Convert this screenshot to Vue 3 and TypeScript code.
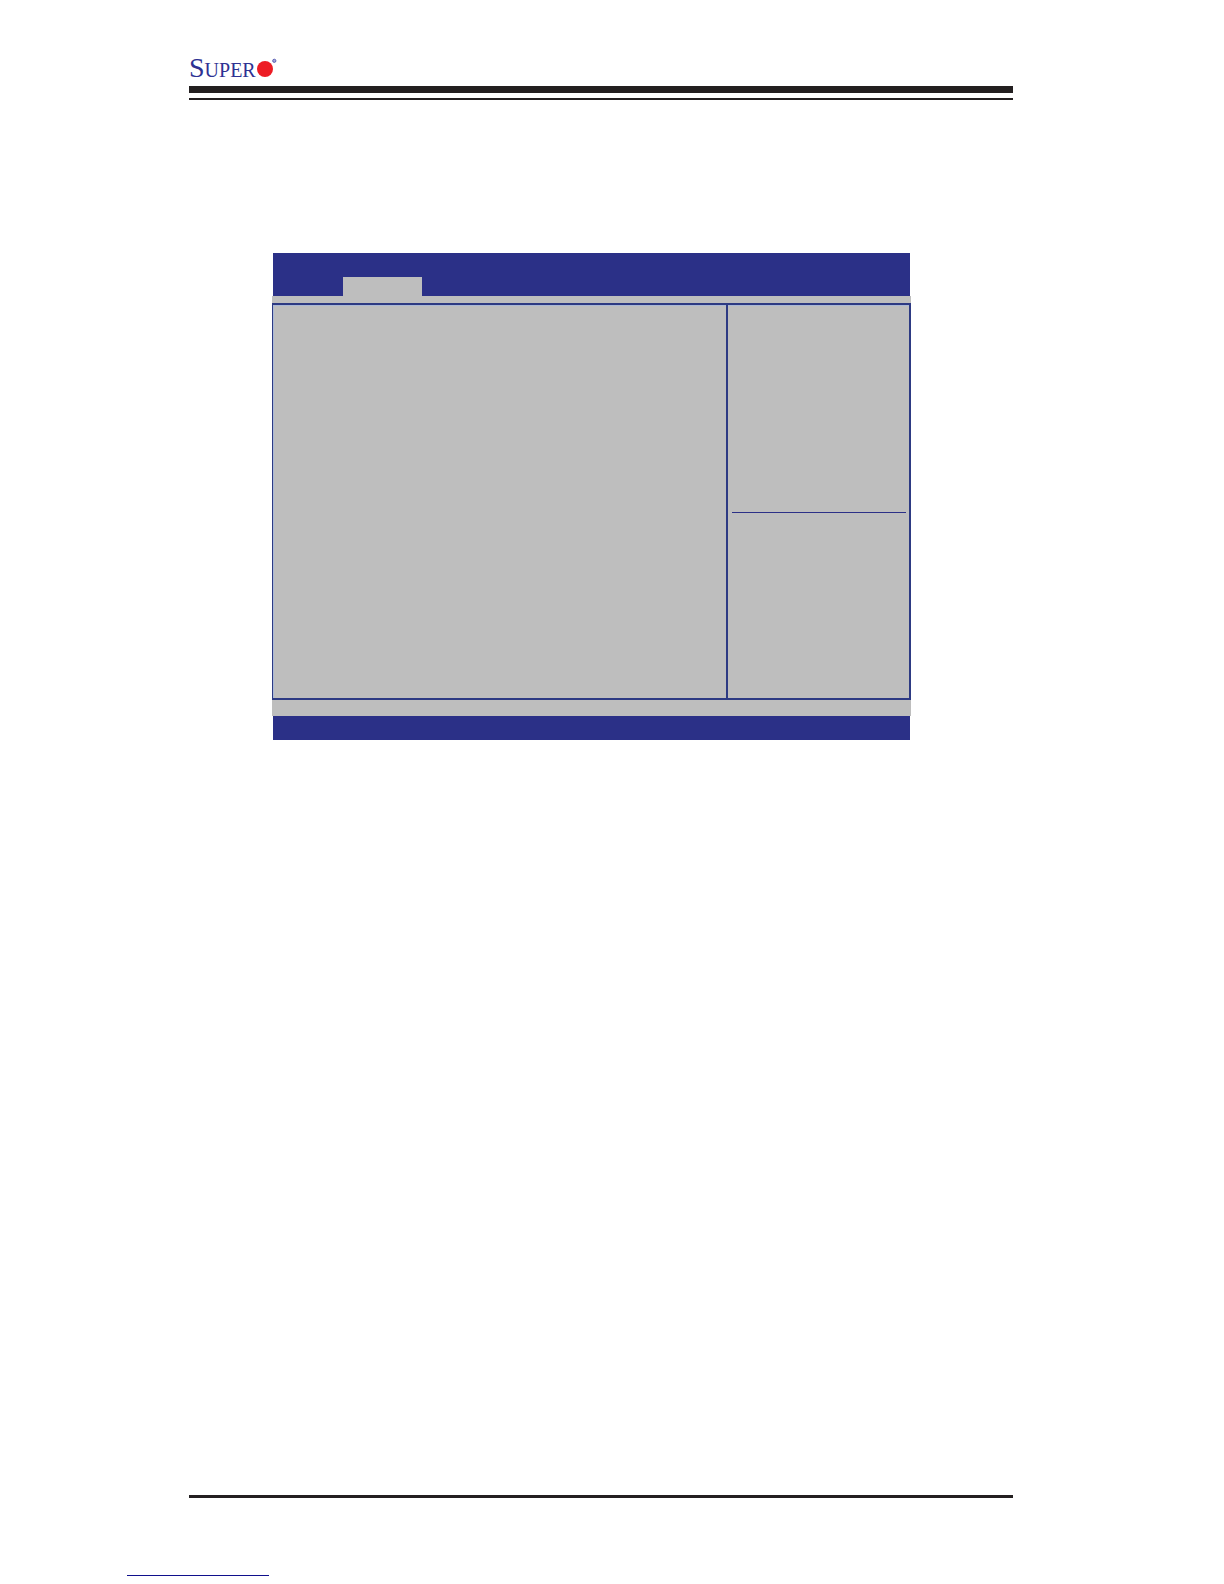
<script setup lang="ts">
const brandInitial: string = 'S'
const brandRest: string = 'UPER'
</script>

<template>
  <div class="page">
    <header class="page-header">
      <div class="logo">
        <span class="logo-text"><span class="logo-initial">{{ brandInitial }}</span>{{ brandRest }}</span>
        <svg class="logo-mark" width="22" height="20" viewBox="0 0 22 20" aria-hidden="true">
          <circle cx="9" cy="11" r="8" fill="#ed1c24" />
          <circle cx="18.3" cy="2.8" r="1.6" fill="#a3a6da" stroke="#5b60b4" stroke-width="1" />
        </svg>
      </div>
      <div class="rule-thick"></div>
      <div class="rule-thin"></div>
    </header>

    <main class="content">
      <section class="bios" aria-label="Setup screen">
        <div class="bios-top">
          <div class="bios-tab"></div>
        </div>
        <div class="bios-frame">
          <div class="bios-main"></div>
          <aside class="bios-side">
            <div class="side-help"></div>
            <div class="side-keys"></div>
          </aside>
        </div>
        <div class="bios-bottom"></div>
      </section>
    </main>

    <div class="rule-foot"></div>
    <footer class="page-footer">
      <a class="foot-link" href="#" aria-label="Manual download"></a>
    </footer>
  </div>
</template>

<style>
body {
  margin: 0;
  background: #fff;
}
</style>

<style scoped>
.page {
  box-sizing: border-box;
  min-height: 100vh;
  padding: 56px 211px 0 189px;
  display: flex;
  flex-direction: column;
  font-family: "Liberation Serif", "Times New Roman", serif;
}

.logo {
  display: flex;
  height: 30px;
}

.logo-text {
  color: #2e3192;
  font-size: 20px;
  line-height: 24px;
}

.logo-initial {
  font-size: 28px;
}

.logo-mark {
  margin-top: 2px;
  flex: none;
}

.rule-thick {
  height: 7px;
  background: #231f20;
}

.rule-thin {
  height: 2px;
  margin-top: 5px;
  background: #231f20;
}

.content {
  flex: 1;
  padding: 153px 102px 0 83px;
}

.bios {
  display: flex;
  flex-direction: column;
}

.bios-top {
  height: 43px;
  margin: 0 1px;
  padding-left: 70px;
  display: flex;
  align-items: flex-end;
  background: #2b3087;
}

.bios-tab {
  width: 79px;
  height: 19px;
  background: #bebebe;
}

.bios-frame {
  display: flex;
  height: 397px;
  border: solid #bebebe;
  border-width: 7px 0 16px;
  background: #bebebe;
}

.bios-main {
  flex: 1;
  border: 2px solid #2d3a83;
  border-left-width: 1px;
  box-shadow: inset 1px 1px #abb9d6;
}

.bios-side {
  box-sizing: border-box;
  width: 183px;
  display: flex;
  flex-direction: column;
  padding: 0 3px 0 4px;
  border: 2px solid #2d3a83;
  border-left: 0;
  box-shadow: inset 0 1px #abb9d6;
}

.side-help {
  height: 207px;
  border-bottom: 1px solid #2b3087;
}

.side-keys {
  flex: 1;
}

.bios-bottom {
  height: 24px;
  margin: 0 1px;
  background: #2b3087;
}

.rule-foot {
  height: 3px;
  background: #231f20;
}

.page-footer {
  height: 86px;
  margin-left: -62px;
  display: flex;
  align-items: flex-start;
}

.foot-link {
  width: 142px;
  height: 77px;
  border-bottom: 1px solid #10108c;
}
</style>
